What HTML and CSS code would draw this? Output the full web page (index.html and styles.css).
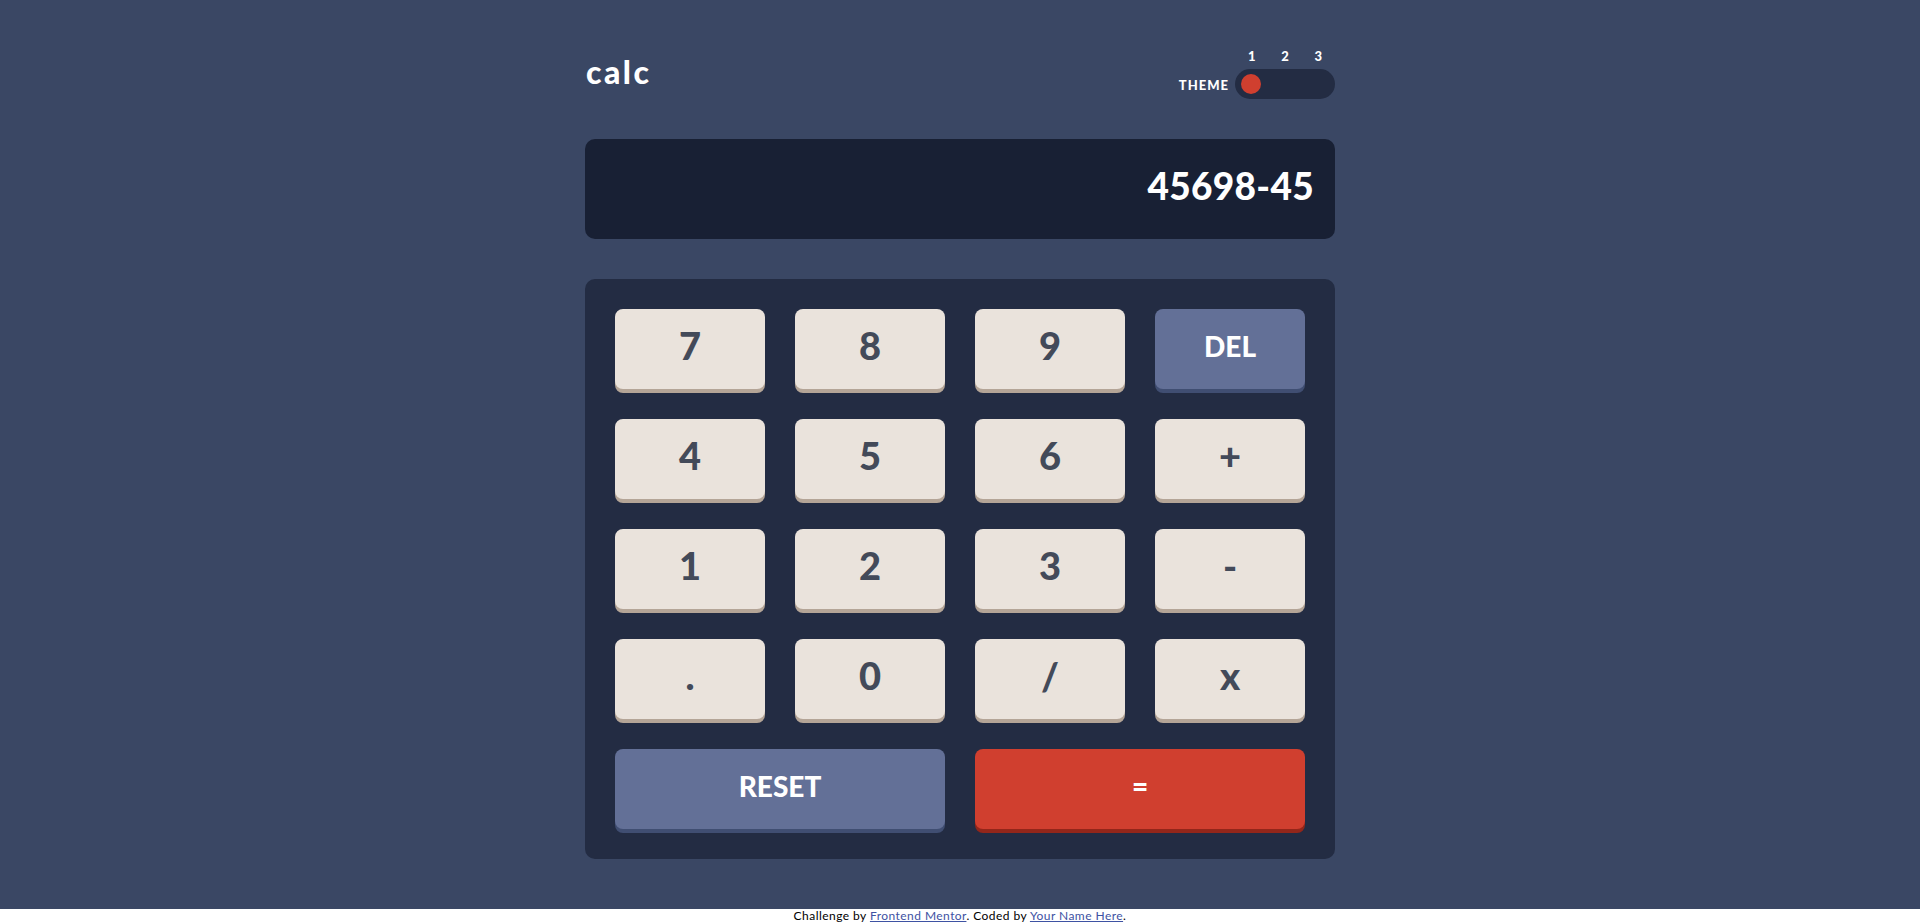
FILE: index.html
```html
<!DOCTYPE html>
<html lang="en">
<head>
<meta charset="utf-8">
<title>Calculator app</title>
<link rel="stylesheet" href="styles.css">
</head>
<body>
<main class="page">
  <div class="calc">
    <header class="top">
      <h1 class="logo">calc</h1>
      <div class="theme">
        <div class="theme-nums"><span>1</span><span>2</span><span>3</span></div>
        <div class="theme-row">
          <span class="theme-label">THEME</span>
          <div class="toggle"><span class="knob"></span></div>
        </div>
      </div>
    </header>
    <section class="screen"><span class="value">45698-45</span></section>
    <section class="keypad">
      <button class="key">7</button>
      <button class="key">8</button>
      <button class="key">9</button>
      <button class="key key-blue key-word">DEL</button>
      <button class="key">4</button>
      <button class="key">5</button>
      <button class="key">6</button>
      <button class="key">+</button>
      <button class="key">1</button>
      <button class="key">2</button>
      <button class="key">3</button>
      <button class="key">-</button>
      <button class="key">.</button>
      <button class="key">0</button>
      <button class="key">/</button>
      <button class="key">x</button>
      <button class="key key-blue key-word key-wide">RESET</button>
      <button class="key key-red key-word key-wide">=</button>
    </section>
  </div>
</main>
<footer class="attribution">
  Challenge by <a href="#">Frontend Mentor</a>. Coded by <a href="#">Your Name Here</a>.
</footer>
</body>
</html>
```
FILE: styles.css
```css
* { box-sizing: border-box; }

html, body {
  margin: 0;
  padding: 0;
  background: #ffffff;
  font-family: "Lato", "Liberation Sans", sans-serif;
}

.page {
  background: #3a4764;
  padding: 49px 0 50px;
}

.calc {
  width: 750px;
  margin: 0 auto;
}

.top {
  display: flex;
  justify-content: space-between;
  align-items: flex-end;
}

.logo {
  margin: 0 0 12px 1px;
  color: #ffffff;
  font-size: 32px;
  line-height: 30px;
  font-weight: 900;
  letter-spacing: 2.5px;
}

.theme {
  display: flex;
  flex-direction: column;
  align-items: flex-end;
}

.theme-nums {
  width: 100px;
  display: grid;
  grid-template-columns: repeat(3, 1fr);
  color: #ffffff;
  font-size: 13px;
  line-height: 14px;
  font-weight: 900;
  text-align: center;
  margin-bottom: 6px;
}

.theme-row {
  display: flex;
  align-items: center;
  gap: 6px;
}

.theme-label {
  color: #ffffff;
  font-size: 13px;
  font-weight: 900;
  letter-spacing: 1px;
  padding-top: 1px;
}

.toggle {
  width: 100px;
  height: 30px;
  border-radius: 15px;
  background: #232c43;
  display: flex;
  align-items: center;
  padding: 0 6px;
}

.knob {
  width: 20px;
  height: 20px;
  border-radius: 50%;
  background: #d03f2f;
  margin-top: -1px;
}

.screen {
  margin-top: 40px;
  height: 100px;
  border-radius: 10px;
  background: #182034;
  display: flex;
  align-items: center;
  justify-content: flex-end;
  padding: 0 21px 8px;
}

.value {
  color: #ffffff;
  font-size: 37px;
  font-weight: 900;
  letter-spacing: 0.3px;
}

.keypad {
  margin-top: 40px;
  background: #232c43;
  border-radius: 10px;
  padding: 30px;
  display: grid;
  grid-template-columns: repeat(4, 150px);
  grid-auto-rows: 80px;
  column-gap: 30px;
  row-gap: 30px;
}

.key {
  border: 0;
  margin: 0;
  border-radius: 8px;
  background: #eae3dc;
  box-shadow: 0 4px 0 #b4a597;
  color: #434a59;
  font-family: "Lato", "Liberation Sans", sans-serif;
  font-size: 38px;
  font-weight: 900;
  display: flex;
  align-items: center;
  justify-content: center;
  padding: 0 0 9px;
  cursor: pointer;
}

.key-word {
  font-size: 28px;
  color: #ffffff;
  padding-bottom: 6px;
}

.key-blue {
  background: #637097;
  box-shadow: 0 4px 0 #404e72;
}

.key-red {
  background: #d03f2f;
  box-shadow: 0 4px 0 #93261a;
}

.key-wide {
  grid-column: span 2;
}

.attribution {
  font-size: 12px;
  line-height: 13px;
  text-align: center;
  color: #000000;
  letter-spacing: 0.45px;
}

.attribution a {
  color: #3e52a3;
}
```
